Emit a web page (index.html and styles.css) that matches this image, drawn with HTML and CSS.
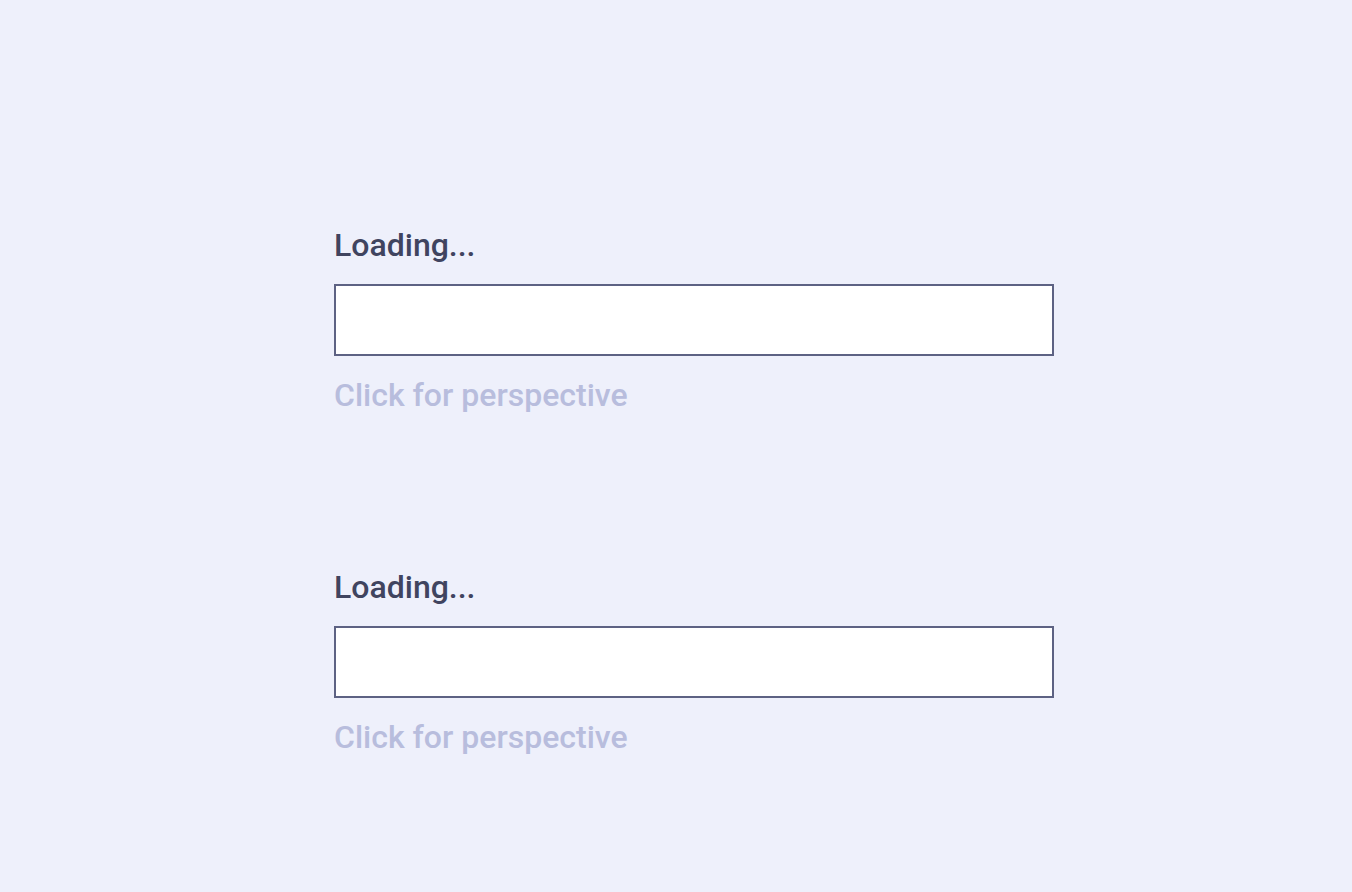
FILE: index.html
```html
<!DOCTYPE html>
<html>
<head>
    <title>Perspective</title>
    <link rel="stylesheet" href="styles.css">
</head>
<body>
    <div class="page">
        <div class="widget">
            <div class="title">Loading...</div>
            <div class="frame"></div>
            <div class="hint">Click for perspective</div>
        </div>
        <div class="widget">
            <div class="title">Loading...</div>
            <div class="frame"></div>
            <div class="hint">Click for perspective</div>
        </div>
    </div>
</body>
</html>
```

FILE: styles.css
```css
html, body {
    margin: 0;
    padding: 0;
}
body {
    font-family: Roboto, "Liberation Sans", sans-serif;
    background-color: #eef0fb;
    min-height: 892px;
}
.page {
    padding: 226px 0 0 334px;
    display: flex;
    flex-direction: column;
    gap: 154px;
}
.widget {
    width: 720px;
}
.title {
    font-size: 32px;
    font-weight: 500;
    color: #40445f;
    line-height: 38px;
    margin-bottom: 20px;
}
.frame {
    height: 68px;
    border: 2px solid #5d6283;
    background: #ffffff;
}
.hint {
    font-size: 32px;
    font-weight: 500;
    color: #b8bddd;
    line-height: 38px;
    margin-top: 20px;
}
```
